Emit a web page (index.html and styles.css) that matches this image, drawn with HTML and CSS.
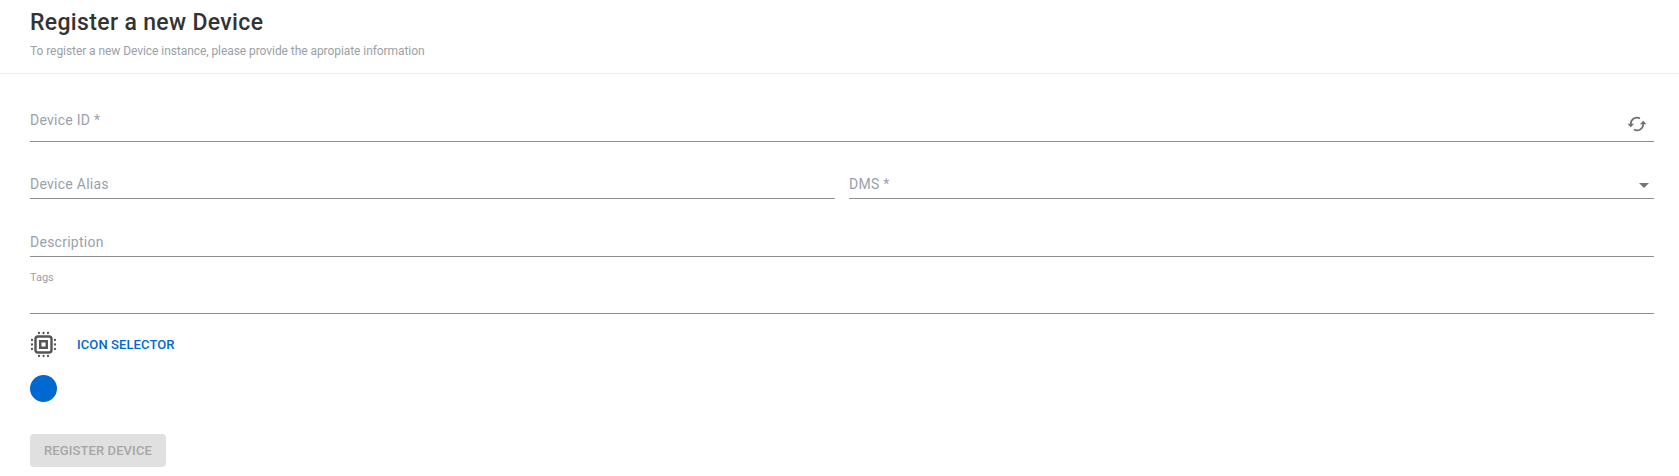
FILE: index.html
```
<!DOCTYPE html>
<html lang="en">
<head>
<meta charset="utf-8">
<title>Register a new Device</title>
<link rel="stylesheet" href="styles.css">
</head>
<body>
<header class="header">
  <h1 class="title">Register a new Device</h1>
  <p class="subtitle">To register a new Device instance, please provide the apropiate information</p>
</header>
<main class="form">
  <div class="field field-id">
    <label class="label">Device ID *</label>
    <svg class="refresh" viewBox="0 0 20 16" width="20" height="16">
      <path d="M3.800 9V8A6.200 6.200 0 0 1 13 2.400M16.200 7v1A6.200 6.200 0 0 1 7 13.600" fill="none" stroke="#6f6f6f" stroke-width="1.7"/>
      <path d="M.5 7.800h6.600L3.800 11.200zM12.900 8.200h6.600L16.200 4.800z" fill="#6f6f6f"/>
    </svg>
  </div>
  <div class="row">
    <div class="field"><label class="label">Device Alias</label></div>
    <div class="field">
      <label class="label">DMS *</label>
      <svg class="caret" viewBox="0 0 10 5" width="10" height="5"><path d="M0 0h10L5 5z" fill="#757575"/></svg>
    </div>
  </div>
  <div class="field field-description"><label class="label">Description</label></div>
  <div class="field field-tags"><label class="label label-small">Tags</label></div>
  <div class="icon-row">
    <svg class="chip" viewBox="0 0 27 27" width="27" height="27">
      <rect x="5.500" y="5.500" width="16" height="16" rx="2.500" fill="none" stroke="#555" stroke-width="2.400"/>
      <rect x="10.250" y="10.250" width="6.500" height="6.500" fill="none" stroke="#555" stroke-width="2.500"/>
      <path d="M9 2h.01M13.500 2h.01M18 2h.01M9 25h.01M13.500 25h.01M18 25h.01M2 9h.01M2 13.500h.01M2 18h.01M25 9h.01M25 13.500h.01M25 18h.01" stroke="#555" stroke-width="2.300" stroke-linecap="round"/>
    </svg>
    <button class="selector">ICON SELECTOR</button>
  </div>
  <div class="color"></div>
  <button class="submit" disabled>REGISTER DEVICE</button>
</main>
</body>
</html>
```
FILE: styles.css
```
* { box-sizing: border-box; }
body { margin: 0; background: #fff; font-family: Roboto, sans-serif; }
.header { height: 74px; padding: 9px 30px 0; border-bottom: 1px solid #ebebeb; }
.title { margin: 0; font-size: 23px; line-height: 27px; font-weight: 500; letter-spacing: .34px; color: #333; }
.subtitle { margin: 7px 0 0; font-size: 12px; line-height: 16px; letter-spacing: -.065px; color: #9a9fa8; }
.form { display: flex; flex-direction: column; padding: 0 25px 0 30px; }
.field { display: flex; justify-content: space-between; border-bottom: 1px solid #8f8f8f; }
.label { font-size: 14px; line-height: 20px; letter-spacing: .26px; color: #9a9fac; }
.field-id { height: 68px; padding-top: 36px; }
.refresh { margin: 6px 7px 0 0; }
.row { display: grid; grid-template-columns: 805px 805px; gap: 14px; }
.row .field { height: 57px; padding-top: 32px; }
.caret { margin: 9px 5px 0 0; }
.field-description { height: 58px; padding-top: 33px; }
.field-tags { height: 57px; padding-top: 12px; }
.label-small { font-size: 11px; line-height: 18px; letter-spacing: 0; }
.icon-row { display: flex; align-items: center; gap: 20px; height: 61px; }
button { padding: 0; border: 0; font: 500 13px/20px Roboto, sans-serif; letter-spacing: .1px; }
.selector { background: none; color: #0068d1; }
.color { width: 27px; height: 27px; border-radius: 50%; background: #0068d1; }
.submit { width: 136px; height: 33px; margin-top: 32px; border-radius: 4px; background: #e0e0e0; color: #a6a6a6; }
```
